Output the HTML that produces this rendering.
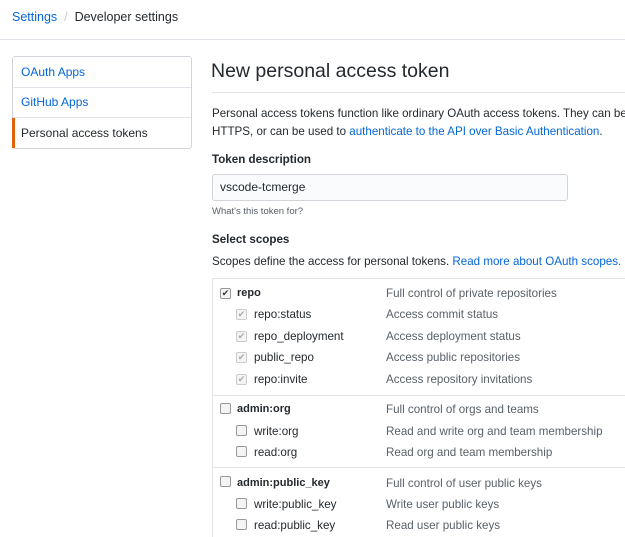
<!DOCTYPE html><html><head><style>
html,body{margin:0;width:625px;height:537px;overflow:hidden}
body{background:#fff;font-family:"Liberation Sans",sans-serif;color:#24292e;font-size:11.6px;position:relative}
.a{position:absolute;white-space:nowrap}
.l{color:#0366d6}
.cb{position:absolute;width:9px;height:9px;border:1px solid #999;border-radius:2px;background:#f4f4f4}
.ck{font-size:9px;line-height:9px;text-align:center;color:#333}
.ckg{color:#aaa;border-color:#ccc}
.d{color:#586069}
</style></head><body>
<div class="a" style="left:12px;top:10px;font-size:12.5px"><span class="l">Settings</span> <span style="color:#ccc">&nbsp;/&nbsp;</span> <span>Developer settings</span></div>
<div class="a" style="left:0;top:39px;width:625px;border-top:1px solid #e1e4e8"></div>
<div class="a" style="left:12px;top:56px;width:178px;height:91px;border:1px solid #d1d5da;border-radius:3px"></div>
<div class="a" style="left:13px;top:87px;width:178px;border-top:1px solid #e1e4e8"></div>
<div class="a" style="left:13px;top:117px;width:178px;border-top:1px solid #e1e4e8"></div>
<div class="a" style="left:12px;top:118px;width:3px;height:30px;background:#e36209"></div>
<div class="a l" style="left:21px;top:65px;font-size:12px">OAuth Apps</div>
<div class="a l" style="left:21px;top:95px;font-size:12px">GitHub Apps</div>
<div class="a" style="left:21px;top:126px;font-size:12px">Personal access tokens</div>
<div class="a" style="left:211px;top:60px;font-size:19.5px">New personal access token</div>
<div class="a" style="left:212px;top:92px;width:413px;border-top:1px solid #e1e4e8"></div>
<div class="a" style="left:212px;top:105px;line-height:18px">Personal access tokens function like ordinary OAuth access tokens. They can be used<br>HTTPS, or can be used to <span class="l">authenticate to the API over Basic Authentication</span>.</div>
<div class="a" style="left:212px;top:153px;font-weight:bold">Token description</div>
<div class="a" style="left:212px;top:174px;width:354px;height:25px;border:1px solid #d1d5da;border-radius:3px;background:#fafbfc"></div>
<div class="a" style="left:220px;top:180px;font-size:12px">vscode-tcmerge</div>
<div class="a" style="left:212px;top:206px;font-size:9.5px;color:#586069">What's this token for?</div>
<div class="a" style="left:212px;top:233px;font-weight:bold">Select scopes</div>
<div class="a" style="left:212px;top:255px">Scopes define the access for personal tokens. <span class="l">Read more about OAuth scopes.</span></div>
<div class="a" style="left:212px;top:278px;width:413px;height:259px;border-left:1px solid #e1e4e8;border-top:1px solid #e1e4e8"></div>
<div class="a" style="left:213px;top:395px;width:412px;border-top:1px solid #e1e4e8"></div>
<div class="a" style="left:213px;top:467px;width:412px;border-top:1px solid #e1e4e8"></div>

<div class="cb ck" style="left:220px;top:288px">✔</div><div class="a" style="left:237px;top:287px;font-weight:bold;font-size:11px">repo</div><div class="a d" style="left:386px;top:287px">Full control of private repositories</div>
<div class="cb ck ckg" style="left:236px;top:309px">✔</div><div class="a" style="left:254px;top:308px">repo:status</div><div class="a d" style="left:386px;top:308px">Access commit status</div>
<div class="cb ck ckg" style="left:236px;top:331px">✔</div><div class="a" style="left:254px;top:330px">repo_deployment</div><div class="a d" style="left:386px;top:330px">Access deployment status</div>
<div class="cb ck ckg" style="left:236px;top:352px">✔</div><div class="a" style="left:254px;top:351px">public_repo</div><div class="a d" style="left:386px;top:351px">Access public repositories</div>
<div class="cb ck ckg" style="left:236px;top:374px">✔</div><div class="a" style="left:254px;top:373px">repo:invite</div><div class="a d" style="left:386px;top:373px">Access repository invitations</div>

<div class="cb" style="left:220px;top:403px"></div><div class="a" style="left:237px;top:403px;font-weight:bold;font-size:11px">admin:org</div><div class="a d" style="left:386px;top:403px">Full control of orgs and teams</div>
<div class="cb" style="left:236px;top:425px"></div><div class="a" style="left:254px;top:425px">write:org</div><div class="a d" style="left:386px;top:425px">Read and write org and team membership</div>
<div class="cb" style="left:236px;top:446px"></div><div class="a" style="left:254px;top:446px">read:org</div><div class="a d" style="left:386px;top:446px">Read org and team membership</div>

<div class="cb" style="left:220px;top:476px"></div><div class="a" style="left:237px;top:477px;font-weight:bold;font-size:11px">admin:public_key</div><div class="a d" style="left:386px;top:477px">Full control of user public keys</div>
<div class="cb" style="left:236px;top:498px"></div><div class="a" style="left:254px;top:498px">write:public_key</div><div class="a d" style="left:386px;top:498px">Write user public keys</div>
<div class="cb" style="left:236px;top:519px"></div><div class="a" style="left:254px;top:519px">read:public_key</div><div class="a d" style="left:386px;top:519px">Read user public keys</div>
</body></html>
